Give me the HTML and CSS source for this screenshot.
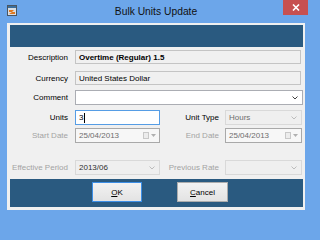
FILE: index.html
```html
<!DOCTYPE html>
<html>
<head>
<meta charset="utf-8">
<link rel="stylesheet" href="styles.css">
</head>
<body>
<div class="window">
  <div class="titlebar">
    <div class="appicon">
      <svg width="10" height="11" viewBox="0 0 10 11">
        <rect x="0.5" y="0.5" width="9" height="10" fill="#d8dde3" stroke="#4a5560"/>
        <rect x="1" y="1" width="8" height="2" fill="#3b6e9c"/>
        <path d="M2 5 H7 L5 7 H8 V9 H2 L5 7 H2 Z" fill="#e0781e"/>
      </svg>
    </div>
    <div class="title">Bulk Units Update</div>
    <div class="close">
      <svg width="8" height="7" viewBox="0 0 8 7"><path d="M1 0.5 L7 6.5 M7 0.5 L1 6.5" stroke="#fff" stroke-width="1.6"/></svg>
    </div>
  </div>
  <div class="client">
    <div class="banner"></div>

    <div class="row r-desc">
      <span class="lbl">Description</span>
      <div class="field ro full bold">Overtime (Regular) 1.5</div>
    </div>
    <div class="row r-curr">
      <span class="lbl">Currency</span>
      <div class="field ro full">United States Dollar</div>
    </div>
    <div class="row r-comm">
      <span class="lbl">Comment</span>
      <div class="field edit full2 combo">
        <span class="val"></span>
        <svg class="chev" width="6" height="4" viewBox="0 0 6 4"><path d="M0.5 0.5 L3 3 L5.5 0.5" fill="none" stroke="#404040" stroke-width="1"/></svg>
      </div>
    </div>
    <div class="row r-units">
      <span class="lbl">Units</span>
      <div class="field edit focus half"><span class="val">3</span><span class="caret"></span></div>
      <span class="lbl2">Unit Type</span>
      <div class="field dis half2 combo">
        <span class="val grey">Hours</span>
        <svg class="chev" width="6" height="4" viewBox="0 0 6 4"><path d="M0.5 0.5 L3 3 L5.5 0.5" fill="none" stroke="#bcbcbc" stroke-width="1"/></svg>
      </div>
    </div>
    <div class="row r-date">
      <span class="lbl off">Start Date</span>
      <div class="field date half combo">
        <span class="val grey">25/04/2013</span>
        <span class="cal"></span>
        <svg class="tri" width="5" height="3" viewBox="0 0 5 3"><path d="M0 0 H5 L2.5 3 Z" fill="#b0b0b0"/></svg>
      </div>
      <span class="lbl2 off">End Date</span>
      <div class="field date half2 combo">
        <span class="val grey">25/04/2013</span>
        <span class="cal"></span>
        <svg class="tri" width="5" height="3" viewBox="0 0 5 3"><path d="M0 0 H5 L2.5 3 Z" fill="#b0b0b0"/></svg>
      </div>
    </div>
    <div class="row r-eff">
      <span class="lbl off">Effective Period</span>
      <div class="field dis half combo">
        <span class="val dark">2013/06</span>
        <svg class="chev" width="6" height="4" viewBox="0 0 6 4"><path d="M0.5 0.5 L3 3 L5.5 0.5" fill="none" stroke="#bcbcbc" stroke-width="1"/></svg>
      </div>
      <span class="lbl2 off">Previous Rate</span>
      <div class="field dis half2 combo">
        <span class="val"></span>
        <svg class="chev" width="6" height="4" viewBox="0 0 6 4"><path d="M0.5 0.5 L3 3 L5.5 0.5" fill="none" stroke="#bcbcbc" stroke-width="1"/></svg>
      </div>
    </div>

    <div class="actions">
      <button class="btn default"><u>O</u>K</button>
      <button class="btn"><u>C</u>ancel</button>
    </div>
  </div>
</div>
</body>
</html>
```
FILE: styles.css
```css
html, body {
  margin: 0;
  padding: 0;
  background: #6ca6ea;
}
.window {
  width: 312px;
  height: 216px;
  box-sizing: border-box;
  background: #6ca6ea;
  display: flex;
  flex-direction: column;
  font-family: "Liberation Sans", Arial, sans-serif;
  font-size: 8px;
  color: #000;
}
.titlebar {
  height: 23px;
  display: grid;
  grid-template-columns: 1fr auto 1fr;
  align-items: start;
}
.appicon {
  padding: 5px 0 0 7px;
  line-height: 0;
}
.title {
  font-size: 10.3px;
  line-height: 12px;
  padding-top: 6px;
  color: #111;
}
.close {
  justify-self: end;
  margin-right: 4px;
  width: 25px;
  height: 15px;
  background: #c75050;
  display: flex;
  align-items: center;
  justify-content: center;
}
.client {
  flex: 1;
  margin: 0 7px 6px 7px;
  padding: 2px 2px 3px 3px;
  background: #f0f0f0;
  display: flex;
  flex-direction: column;
}
.banner {
  height: 22px;
  background: #2a5a80;
}
.row {
  display: flex;
  align-items: stretch;
}
.r-desc { margin-top: 3px; height: 14px; }
.r-curr { margin-top: 7px; height: 14px; }
.r-comm { margin-top: 5px; height: 15px; }
.r-units { margin-top: 5px; height: 15px; }
.r-date { margin-top: 3px; height: 15px; }
.r-eff { margin-top: 17px; height: 15px; }

.lbl, .lbl2 {
  display: flex;
  align-items: center;
  justify-content: flex-end;
  white-space: nowrap;
}
.lbl {
  width: 58px;
  margin-right: 7px;
}
.lbl2 {
  width: 59px;
  margin-right: 6px;
}
.off { color: #a3a3a3; }

.field {
  box-sizing: border-box;
  border: 1px solid #abadb3;
  display: flex;
  align-items: center;
  padding-left: 3px;
  white-space: nowrap;
  overflow: hidden;
}
.full { width: 226px; }
.full2 { width: 228px; }
.half { width: 85px; }
.half2 { width: 77px; }
.bold { font-weight: bold; }
.ro {
  background: #f0f0f0;
  border-color: #c4c4c4;
}
.edit { background: #fff; }
.focus { border-color: #569de5; }
.dis {
  background: #efefef;
  border-color: #d9d9d9;
}
.date {
  background: #f7f7f7;
  border-color: #a9a9a9;
}
.combo .val { flex: 1; }
.grey { color: #6d6d6d; }
.dark { color: #303030; }
.chev { margin-right: 4px; }
.caret {
  width: 1px;
  height: 10px;
  background: #000;
  margin-left: 1px;
}
.cal {
  width: 6px;
  height: 7px;
  box-sizing: border-box;
  border: 1px solid #c8c8c8;
  background: #ececec;
  margin-right: 2px;
}
.tri { margin-right: 3px; }

.actions {
  margin-top: 4px;
  height: 28px;
  box-sizing: border-box;
  background: #2a5a80;
  display: flex;
  align-items: flex-start;
  padding: 3px 0 0 82px;
  gap: 35px;
}
.btn {
  width: 50px;
  height: 20px;
  box-sizing: border-box;
  border: 1px solid #acacac;
  background: linear-gradient(#f2f2f2, #e3e3e3);
  font-family: "Liberation Sans", Arial, sans-serif;
  font-size: 8px;
  color: #000;
  padding: 0;
  margin: 0;
}
.btn + .btn { width: 51px; }
.default { border-color: #3c8ee6; }
```
